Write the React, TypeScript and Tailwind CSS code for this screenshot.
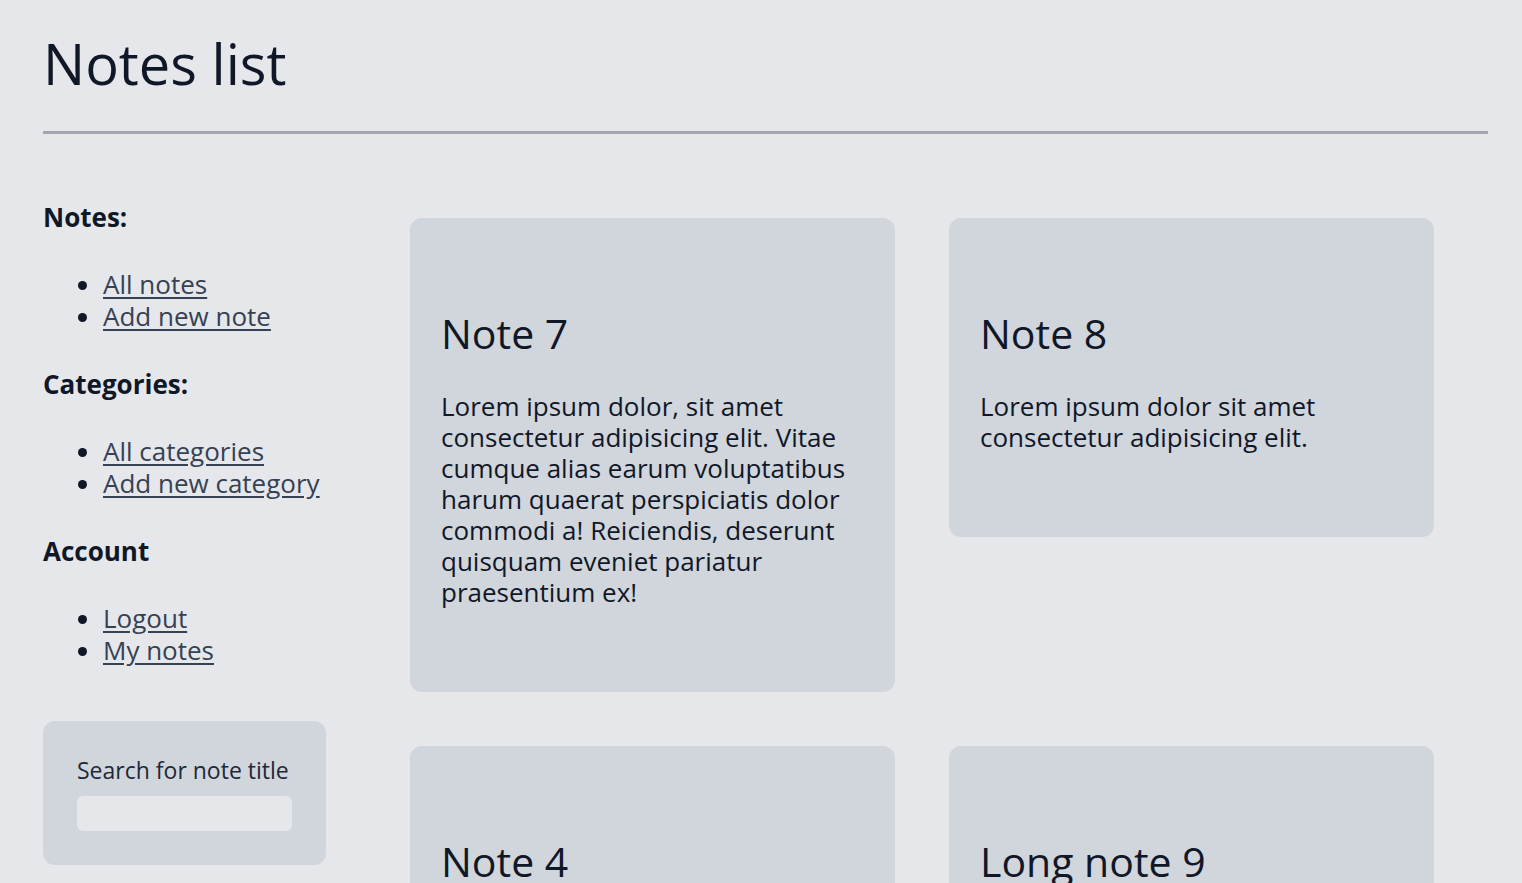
import React from "react";

type Note = { title: string; body: string };

const notes: Note[] = [
  {
    title: "Note 7",
    body: "Lorem ipsum dolor, sit amet consectetur adipisicing elit. Vitae cumque alias earum voluptatibus harum quaerat perspiciatis dolor commodi a! Reiciendis, deserunt quisquam eveniet pariatur praesentium ex!",
  },
  {
    title: "Note 8",
    body: "Lorem ipsum dolor sit amet consectetur adipisicing elit.",
  },
  {
    title: "Note 4",
    body: "Lorem ipsum dolor sit amet consectetur adipisicing elit. Quas, odit.",
  },
  {
    title: "Long note 9",
    body: "Lorem ipsum dolor sit amet consectetur adipisicing elit. Voluptates vero officia tempore.",
  },
];

const sections = [
  { heading: "Notes:", links: ["All notes", "Add new note"] },
  { heading: "Categories:", links: ["All categories", "Add new category"] },
  { heading: "Account", links: ["Logout", "My notes"] },
];

export default function App() {
  return (
    <div className="min-h-screen bg-gray-200 pl-[43px] pr-[34px] font-['Open_Sans',sans-serif] text-gray-900">
      {/* Header */}
      <h1 className="pt-[29px] text-[56px] leading-[68px] font-normal">Notes list</h1>
      <hr className="mt-[34px] border-0 border-t-[3px] border-[#a1a5ae]" />

      <div className="mt-[67px] flex items-start">
        {/* Sidebar */}
        <aside className="w-[367px] shrink-0">
          {sections.map((s) => (
            <div key={s.heading} className="mb-[36px]">
              <h3 className="text-[26px] leading-[32px] font-bold">{s.heading}</h3>
              <ul className="mt-[35px] list-disc pl-[60px] text-[26px] leading-[32px]">
                {s.links.map((l) => (
                  <li key={l}>
                    <a href="#" className="text-gray-700 underline underline-offset-[3px]">
                      {l}
                    </a>
                  </li>
                ))}
              </ul>
            </div>
          ))}

          <div className="mt-[55px] w-[283px] rounded-xl bg-gray-300 px-[34px] pt-[35px] pb-[34px]">
            <label className="block text-[23px] leading-[28px] text-gray-800">Search for note title</label>
            <input type="text" className="mt-[12px] block h-[35px] w-[215px] rounded-md bg-gray-200 px-2 outline-none" />
          </div>
        </aside>

        {/* Notes grid */}
        <main className="mt-[17px] grid grid-cols-[485px_485px] items-start gap-[54px]">
          {notes.map((n) => (
            <article key={n.title} className="rounded-xl bg-gray-300 px-[31px] pt-[91px] pb-[84px]">
              <h2 className="text-[41px] leading-[48px] font-medium">{n.title}</h2>
              <p className="mt-[34px] text-[26px] leading-[31px]">{n.body}</p>
            </article>
          ))}
        </main>
      </div>
    </div>
  );
}
